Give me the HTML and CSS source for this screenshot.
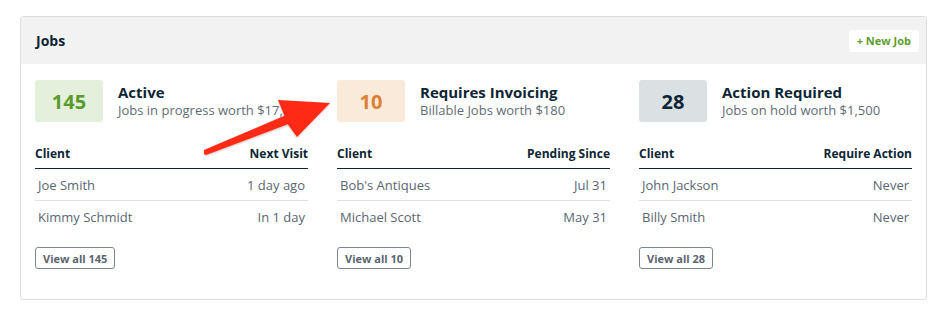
FILE: index.html
```html
<!DOCTYPE html>
<html lang="en">
<head>
    <meta charset="UTF-8">
    <title>Jobs</title>
    <link rel="stylesheet" href="styles.css">
</head>
<body>

    <div class="card">

        <!-- Header -->
        <header class="card-header">
            <h1>Jobs</h1>
            <button class="new-btn">+ New Job</button>
        </header>

        <div class="card-body">

            <!-- Active -->
            <section class="column">
                <div class="stat">
                    <div class="stat-box green">145</div>
                    <div class="stat-text">
                        <h2>Active</h2>
                        <p>Jobs in progress worth $17,750</p>
                    </div>
                </div>
                <table>
                    <thead>
                        <tr><th>Client</th><th class="right">Next Visit</th></tr>
                    </thead>
                    <tbody>
                        <tr><td>Joe Smith</td><td class="right">1 day ago</td></tr>
                        <tr><td>Kimmy Schmidt</td><td class="right">In 1 day</td></tr>
                    </tbody>
                </table>
                <button class="view-btn">View all 145</button>
            </section>

            <!-- Requires Invoicing -->
            <section class="column">
                <div class="stat">
                    <div class="stat-box orange">10</div>
                    <div class="stat-text">
                        <h2>Requires Invoicing</h2>
                        <p>Billable Jobs worth $180</p>
                    </div>
                </div>
                <table>
                    <thead>
                        <tr><th>Client</th><th class="right">Pending Since</th></tr>
                    </thead>
                    <tbody>
                        <tr><td>Bob's Antiques</td><td class="right">Jul 31</td></tr>
                        <tr><td>Michael Scott</td><td class="right">May 31</td></tr>
                    </tbody>
                </table>
                <button class="view-btn">View all 10</button>
            </section>

            <!-- Action Required -->
            <section class="column">
                <div class="stat">
                    <div class="stat-box grey">28</div>
                    <div class="stat-text">
                        <h2>Action Required</h2>
                        <p>Jobs on hold worth $1,500</p>
                    </div>
                </div>
                <table>
                    <thead>
                        <tr><th>Client</th><th class="right">Require Action</th></tr>
                    </thead>
                    <tbody>
                        <tr><td>John Jackson</td><td class="right">Never</td></tr>
                        <tr><td>Billy Smith</td><td class="right">Never</td></tr>
                    </tbody>
                </table>
                <button class="view-btn">View all 28</button>
            </section>
        </div>
    </div>

    <!-- Annotation arrow -->
    <svg class="arrow" width="947" height="315" viewBox="0 0 947 315">
        <defs>
            <filter id="shadow" x="-10%" y="-10%" width="120%" height="130%">
                <feDropShadow dx="0" dy="1" stdDeviation="1" flood-color="#000" flood-opacity="0.25"/>
            </filter>
        </defs>
        <polygon filter="url(#shadow)" fill="#fe2a12"
            points="204,150 284.4,115.8 278,100 330,103 297,137 287.8,124.2 206,155 204,154"/>
    </svg>

</body>
</html>
```

FILE: styles.css
```css
body {
    margin: 0;
    padding: 16px 20px;
    background-color: #fff;
    font-family: 'Open Sans', 'Noto Sans', sans-serif;
    color: #0d2535;
}

.card {
    width: 905px;
    border: 1px solid #dedede;
    border-radius: 3px;
    background-color: #fff;
}

.card-header {
    display: flex;
    justify-content: space-between;
    align-items: center;
    height: 47px;
    padding: 0 7px 0 15px;
    background-color: #f2f2f2;
}

.card-header h1 {
    margin: 0;
    font-size: 14px;
    font-weight: bold;
    color: #0d2535;
}

.new-btn {
    height: 22px;
    padding: 0 8px;
    border: none;
    border-radius: 3px;
    background-color: #fff;
    color: #5e9e2f;
    font-family: inherit;
    font-size: 11px;
    font-weight: bold;
}

.card-body {
    display: grid;
    grid-template-columns: repeat(3, 1fr);
    column-gap: 29px;
    padding: 16px 14px 30px 14px;
}

.stat {
    display: flex;
    align-items: center;
    gap: 15px;
    height: 42px;
}

.stat-box {
    width: 68px;
    height: 42px;
    border-radius: 3px;
    display: flex;
    align-items: center;
    justify-content: center;
    font-size: 20px;
    font-weight: bold;
}

.stat-box.green {
    background-color: #e4f0dc;
    color: #5b9b2c;
}

.stat-box.orange {
    background-color: #f9ead9;
    color: #dd8034;
}

.stat-box.grey {
    background-color: #dbe0e3;
    color: #0d2535;
}

.stat-text h2 {
    margin: 0;
    font-size: 15px;
    line-height: 18px;
    font-weight: bold;
    color: #0d2535;
}

.stat-text p {
    margin: 0;
    font-size: 13px;
    line-height: 18px;
    color: #5f6c76;
    white-space: nowrap;
}

table {
    width: 100%;
    border-collapse: collapse;
    margin-top: 23px;
}

th {
    height: 23px;
    padding: 0;
    text-align: left;
    vertical-align: top;
    font-size: 12px;
    font-weight: bold;
    color: #0d2535;
    border-bottom: 1px solid #0d2535;
}

td {
    height: 31px;
    padding: 0 3px;
    font-size: 13px;
    color: #5a6670;
}

tbody tr:first-child td {
    border-bottom: 1px solid #e1e1e1;
}

.right {
    text-align: right;
}

.view-btn {
    display: block;
    margin-top: 15px;
    height: 22px;
    padding: 0 7px;
    border: 1px solid #7b858c;
    border-radius: 3px;
    background-color: #fff;
    color: #5a6670;
    font-family: inherit;
    font-size: 11px;
    font-weight: bold;
}

.arrow {
    position: absolute;
    top: 0;
    left: 0;
    pointer-events: none;
}
```
